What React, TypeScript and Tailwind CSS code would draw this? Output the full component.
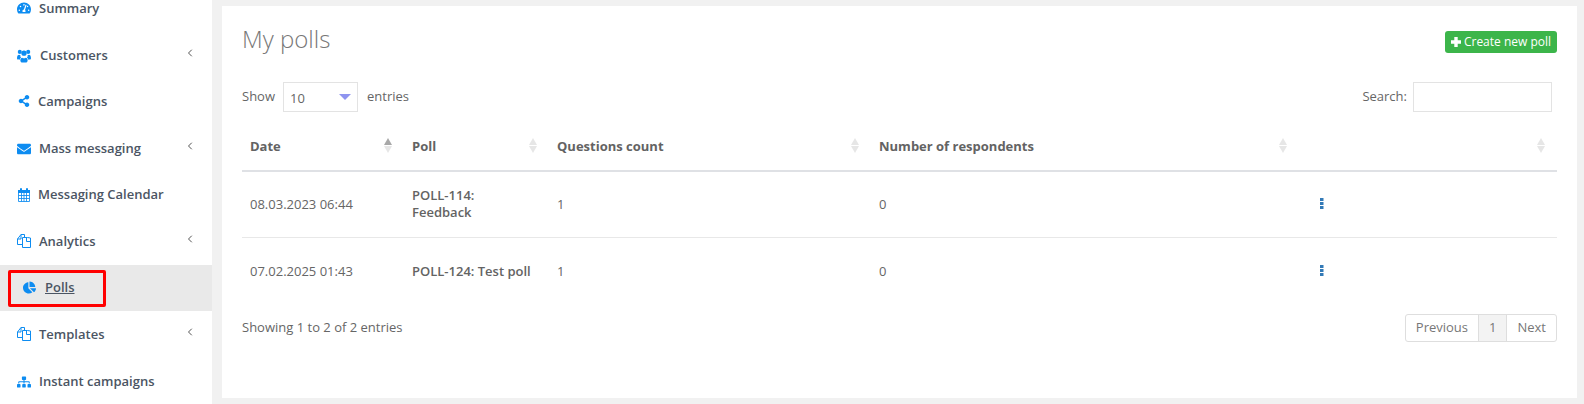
import { FaTachometerAlt, FaShareAlt, FaEnvelope, FaChartPie, FaSitemap } from 'react-icons/fa'
import { ChevronLeft } from 'lucide-react'
import type { ReactNode } from 'react'

function UsersIcon() {
  return (
    <svg width="15" height="14" viewBox="0 0 15 14" fill="currentColor">
      <circle cx="3" cy="2.6" r="2.2" />
      <circle cx="12" cy="2.6" r="2.2" />
      <circle cx="7.5" cy="4" r="2.8" />
      <path d="M0 9.5C0 6.5 1 5.6 2.2 5.6c.6 0 1 .3 1.5.5-.3 1 0 2 .7 2.7-.9.5-1.4 1.2-1.6 2.2C1 11 0 10.800 0 9.500zM15 9.500c0 1.300-1 1.500-2.800 1.500-.2-1-.7-1.700-1.600-2.200.7-.7 1-1.700.7-2.700.5-.2.900-.5 1.500-.5C14 5.600 15 6.500 15 9.500z" />
      <path d="M3.600 11.800c0-2 .8-3 2-3 .5.400 1.100.6 1.900.6s1.400-.2 1.900-.6c1.200 0 2 1 2 3 0 1.400-.9 2.200-2.200 2.200H5.800c-1.300 0-2.200-.8-2.200-2.200z" />
    </svg>
  )
}

function CalendarIcon() {
  return (
    <svg width="12" height="14" viewBox="0 0 12 14" fill="none" stroke="currentColor" strokeWidth="1">
      <rect x="0" y="2" width="12" height="3" fill="currentColor" stroke="none" />
      <rect x="2" y="0" width="2" height="3.500" rx="1" fill="currentColor" stroke="none" />
      <rect x="8" y="0" width="2" height="3.500" rx="1" fill="currentColor" stroke="none" />
      <path d="M.5 4v9.500h11V4M3.500 5v8.500M6 5v8.500M8.500 5v8.500M.5 7.500h11M.5 10.500h11" strokeOpacity="0.85" />
    </svg>
  )
}

function FilesIcon() {
  return (
    <svg width="14" height="14" viewBox="0 0 14 14" fill="none" stroke="currentColor" strokeWidth="1">
      <path d="M5.500 10.500H.5V5l3.500-4.500h3.500v3" />
      <path d="M4 .5V5H.5" />
      <path d="M5.500 3.500h5l3 .5v9.500h-8z" />
      <path d="M9.500 3.500V7.500h4" />
    </svg>
  )
}

interface NavItem {
  label: string
  icon: ReactNode
  gap: string
  shift?: string
  chevron?: string
}

const navItems: NavItem[] = [
  { label: 'Summary', icon: <FaTachometerAlt size={14} />, gap: 'ml-[8px]' },
  { label: 'Customers', icon: <UsersIcon />, gap: 'ml-[9px]', shift: 'pt-[2px]', chevron: '-translate-y-[3px]' },
  { label: 'Campaigns', icon: <FaShareAlt size={12} />, gap: 'ml-[7px]' },
  { label: 'Mass messaging', icon: <FaEnvelope size={14} />, gap: 'ml-[8px]', shift: 'pt-[2px]', chevron: '-translate-y-[3px]' },
  { label: 'Messaging Calendar', icon: <CalendarIcon />, gap: 'ml-[7px]' },
  { label: 'Analytics', icon: <FilesIcon />, gap: 'ml-[8px]', chevron: '-translate-y-[2px]' },
  { label: 'Polls', icon: <FaChartPie size={13} />, gap: 'ml-[9px]' },
  { label: 'Templates', icon: <FilesIcon />, gap: 'ml-[8px]', chevron: '-translate-y-[2px]' },
  { label: 'Instant campaigns', icon: <FaSitemap size={14} />, gap: 'ml-[8px]', shift: 'pt-[2px]' },
]

const columns = [
  { label: 'Date', width: 'w-[162px]', active: true },
  { label: 'Poll', width: 'w-[145px]' },
  { label: 'Questions count', width: 'w-[322px]' },
  { label: 'Number of respondents', width: 'w-[428px]' },
  { label: '', width: 'w-[258px]' },
]

const polls = [
  { date: '08.03.2023 06:44', name: 'POLL-114: Feedback', questions: 1, respondents: 0 },
  { date: '07.02.2025 01:43', name: 'POLL-124: Test poll', questions: 1, respondents: 0 },
]

function SortArrows({ active }: { active?: boolean }) {
  return (
    <span className="absolute right-[12px] top-[8px] flex flex-col gap-[1px]">
      <span className={`h-0 w-0 border-x-[4px] border-b-[7px] border-x-transparent ${active ? 'border-b-[#a8a8a8]' : 'border-b-[#e6e6e6]'}`} />
      <span className="h-0 w-0 border-x-[4px] border-t-[7px] border-x-transparent border-t-[#e6e6e6]" />
    </span>
  )
}

function Sidebar() {
  return (
    <aside className="relative w-[212px] shrink-0 bg-white">
      <nav className="-mt-[15px] flex flex-col">
        {navItems.map(item => {
          const isPolls = item.label === 'Polls'
          return (
            <a
              key={item.label}
              className={`flex h-[46.6px] items-center text-[13px] font-semibold text-[#4b5563] ${item.shift ?? ''} ${isPolls ? 'bg-[#e9e9e9] pl-[22px]' : 'pl-[17px]'}`}
            >
              <span className="flex w-[14px] justify-center text-[#0d8cf1]">{item.icon}</span>
              <span className={`${item.gap} ${isPolls ? 'underline' : ''}`}>{item.label}</span>
              {item.chevron && <ChevronLeft size={12} strokeWidth={2} className={`ml-auto mr-[16px] text-[#555] ${item.chevron}`} />}
            </a>
          )
        })}
      </nav>
      {/* Рамка выделения поверх пункта меню */}
      <div className="absolute left-[8px] top-[270px] h-[37px] w-[98px] rounded-[2px] border-[3px] border-[#ff0000]" />
    </aside>
  )
}

export default function App() {
  return (
    <div className="flex h-[404px] w-[1584px] overflow-hidden bg-[#f1f1f1] font-['Open_Sans',sans-serif] text-[13px] text-[#666]">
      <Sidebar />
      <main className="ml-[10px] mt-[6px] h-[392px] w-[1355px] bg-white px-[20px]">
        <div className="flex h-[76px] items-start justify-between">
          <h1 className="mt-[15px] text-[24px] leading-[36px] font-light text-[#777]">My polls</h1>
          <button className="mt-[25px] flex h-[22px] w-[112px] items-center justify-center gap-[3px] rounded-[3px] bg-[#3cb54a] text-[12px] text-white">
            <svg width="10" height="10" viewBox="0 0 10 10" fill="currentColor">
              <path d="M3.300 0h3.400v3.300H10v3.400H6.700V10H3.300V6.700H0V3.300h3.300z" />
            </svg>
            Create new poll
          </button>
        </div>

        <div className="flex h-[30px] items-center justify-between">
          <div className="flex items-center">
            <span>Show</span>
            <div className="relative ml-[8px] flex h-[30px] w-[75px] items-center border border-[#e3e3e3] pl-[6px] pt-[3px]">
              10
              <span className="absolute right-[6px] top-[11px] h-0 w-0 border-x-[6px] border-t-[6px] border-x-transparent border-t-[#8f94f0]" />
            </div>
            <span className="ml-[9px]">entries</span>
          </div>
          <div className="mr-[5px] flex items-center">
            <span>Search:</span>
            <input className="ml-[6px] h-[30px] w-[139px] border border-[#e3e3e3]" />
          </div>
        </div>

        <table className="mt-[18px] w-[1315px] table-fixed border-collapse text-left">
          <thead>
            <tr className="h-[41px] border-b-2 border-[#dfe1e5]">
              {columns.map((col, i) => (
                <th key={i} className={`relative ${col.width} px-[8px] pb-[6px] font-bold text-[#636363]`}>
                  {col.label}
                  <SortArrows active={col.active} />
                </th>
              ))}
            </tr>
          </thead>
          <tbody>
            {polls.map(poll => (
              <tr key={poll.date} className="h-[66px] border-b border-[#e8e8e8] last:h-[69px] last:border-b-0">
                <td className="px-[8px]">{poll.date}</td>
                <td className="pl-[8px] pr-[16px] leading-[17px] font-semibold text-[#636363]">{poll.name}</td>
                <td className="px-[8px]">{poll.questions}</td>
                <td className="px-[8px]">{poll.respondents}</td>
                <td className="pl-[21px]">
                  <svg width="4" height="11" viewBox="0 0 4 11" fill="#337ab7" className="-translate-y-[1px]">
                    <rect width="3.500" height="3" />
                    <rect y="4" width="3.500" height="3" />
                    <rect y="8" width="3.500" height="3" />
                  </svg>
                </td>
              </tr>
            ))}
          </tbody>
        </table>

        <div className="mt-[7px] flex h-[29px] items-center justify-between">
          <span>Showing 1 to 2 of 2 entries</span>
          <div className="flex h-[28px] items-stretch rounded-[3px] border border-[#dedede] text-[#777]">
            <span className="flex items-center px-[10px]">Previous</span>
            <span className="flex items-center border-x border-[#dedede] bg-[#f3f3f3] px-[10px]">1</span>
            <span className="flex items-center px-[10px]">Next</span>
          </div>
        </div>
      </main>
    </div>
  )
}
